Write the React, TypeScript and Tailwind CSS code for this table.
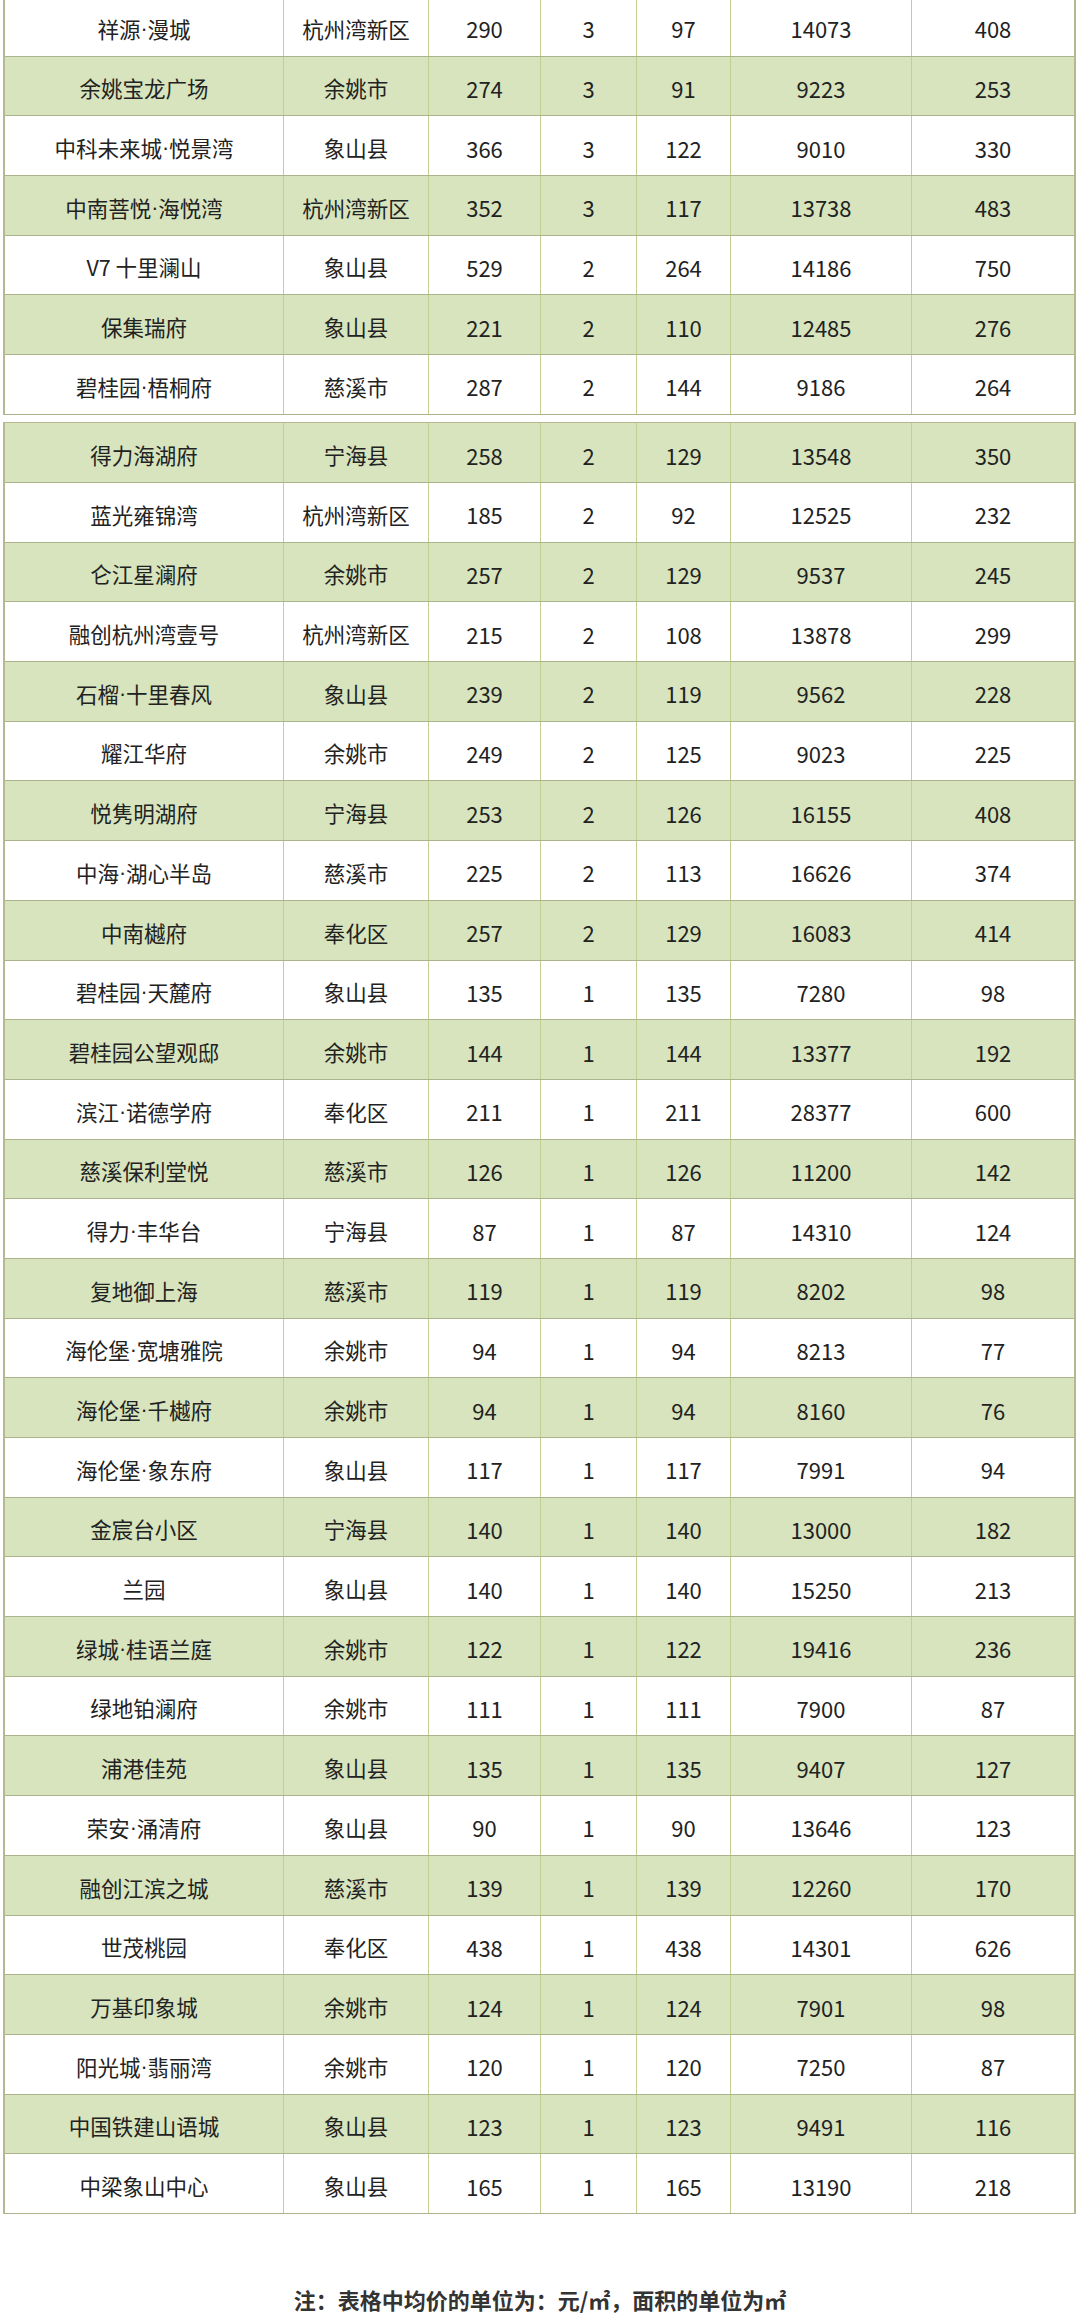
import * as React from "react";

type Row = [string, string, string, string, string, string, string];

const GROUP_A: Row[] = [
  ["祥源·漫城", "杭州湾新区", "290", "3", "97", "14073", "408"],
  ["余姚宝龙广场", "余姚市", "274", "3", "91", "9223", "253"],
  ["中科未来城·悦景湾", "象山县", "366", "3", "122", "9010", "330"],
  ["中南菩悦·海悦湾", "杭州湾新区", "352", "3", "117", "13738", "483"],
  ["V7 十里澜山", "象山县", "529", "2", "264", "14186", "750"],
  ["保集瑞府", "象山县", "221", "2", "110", "12485", "276"],
  ["碧桂园·梧桐府", "慈溪市", "287", "2", "144", "9186", "264"],
];

const GROUP_B: Row[] = [
  ["得力海湖府", "宁海县", "258", "2", "129", "13548", "350"],
  ["蓝光雍锦湾", "杭州湾新区", "185", "2", "92", "12525", "232"],
  ["仑江星澜府", "余姚市", "257", "2", "129", "9537", "245"],
  ["融创杭州湾壹号", "杭州湾新区", "215", "2", "108", "13878", "299"],
  ["石榴·十里春风", "象山县", "239", "2", "119", "9562", "228"],
  ["耀江华府", "余姚市", "249", "2", "125", "9023", "225"],
  ["悦隽明湖府", "宁海县", "253", "2", "126", "16155", "408"],
  ["中海·湖心半岛", "慈溪市", "225", "2", "113", "16626", "374"],
  ["中南樾府", "奉化区", "257", "2", "129", "16083", "414"],
  ["碧桂园·天麓府", "象山县", "135", "1", "135", "7280", "98"],
  ["碧桂园公望观邸", "余姚市", "144", "1", "144", "13377", "192"],
  ["滨江·诺德学府", "奉化区", "211", "1", "211", "28377", "600"],
  ["慈溪保利堂悦", "慈溪市", "126", "1", "126", "11200", "142"],
  ["得力·丰华台", "宁海县", "87", "1", "87", "14310", "124"],
  ["复地御上海", "慈溪市", "119", "1", "119", "8202", "98"],
  ["海伦堡·宽塘雅院", "余姚市", "94", "1", "94", "8213", "77"],
  ["海伦堡·千樾府", "余姚市", "94", "1", "94", "8160", "76"],
  ["海伦堡·象东府", "象山县", "117", "1", "117", "7991", "94"],
  ["金宸台小区", "宁海县", "140", "1", "140", "13000", "182"],
  ["兰园", "象山县", "140", "1", "140", "15250", "213"],
  ["绿城·桂语兰庭", "余姚市", "122", "1", "122", "19416", "236"],
  ["绿地铂澜府", "余姚市", "111", "1", "111", "7900", "87"],
  ["浦港佳苑", "象山县", "135", "1", "135", "9407", "127"],
  ["荣安·涌清府", "象山县", "90", "1", "90", "13646", "123"],
  ["融创江滨之城", "慈溪市", "139", "1", "139", "12260", "170"],
  ["世茂桃园", "奉化区", "438", "1", "438", "14301", "626"],
  ["万基印象城", "余姚市", "124", "1", "124", "7901", "98"],
  ["阳光城·翡丽湾", "余姚市", "120", "1", "120", "7250", "87"],
  ["中国铁建山语城", "象山县", "123", "1", "123", "9491", "116"],
  ["中梁象山中心", "象山县", "165", "1", "165", "13190", "218"],
];

const FONT = { fontFamily: '"Noto Sans CJK SC", "Noto Sans", sans-serif' };
const DOT_FONT = { fontFamily: '"Liberation Sans", sans-serif' };

// 间隔号用西文字体，避免全角宽度
function Name({ text }: { text: string }) {
  const parts = text.split("·");
  if (parts.length === 1) return <>{text}</>;
  return (
    <>
      {parts[0]}
      <span style={DOT_FONT}>·</span>
      {parts[1]}
    </>
  );
}

function TableRow({ row, green }: { row: Row; green: boolean }) {
  return (
    <div
      className={
        "grid h-[59.7px] grid-cols-[278px_145px_112px_96px_94px_181px_163px] border-b border-[#aab38a] text-[#222] " +
        (green ? "bg-[#d7e4bd]" : "bg-white")
      }
    >
      {row.map((cell, i) => (
        <div
          key={i}
          className={
            "flex items-center justify-center pt-[5px] " +
            (i === 0 ? "" : "border-l border-[#c2cf91] ") +
            (i < 2 ? "text-[21.5px]" : "text-[22px]")
          }
        >
          {i === 0 ? <Name text={cell} /> : cell}
        </div>
      ))}
    </div>
  );
}

export default function App() {
  return (
    <div className="h-[2314px] w-[1080px] overflow-hidden bg-white" style={FONT}>
      {/* 第一段 */}
      <div className="-mt-[3px] ml-[3px] w-[1073px] border-x-2 border-[#b4b98f]">
        {GROUP_A.map((r, i) => (
          <TableRow key={r[0]} row={r} green={i % 2 === 1} />
        ))}
      </div>

      {/* 第二段 */}
      <div className="ml-[3px] mt-[7.5px] w-[1073px] border-x-2 border-t border-[#b4b98f]">
        {GROUP_B.map((r, i) => (
          <TableRow key={r[0]} row={r} green={i % 2 === 0} />
        ))}
      </div>

      <div className="mt-[68px] h-[34px] text-center text-[22px] font-bold leading-[34px] text-[#333]">
        注：表格中均价的单位为：元/㎡，面积的单位为㎡
      </div>
    </div>
  );
}
